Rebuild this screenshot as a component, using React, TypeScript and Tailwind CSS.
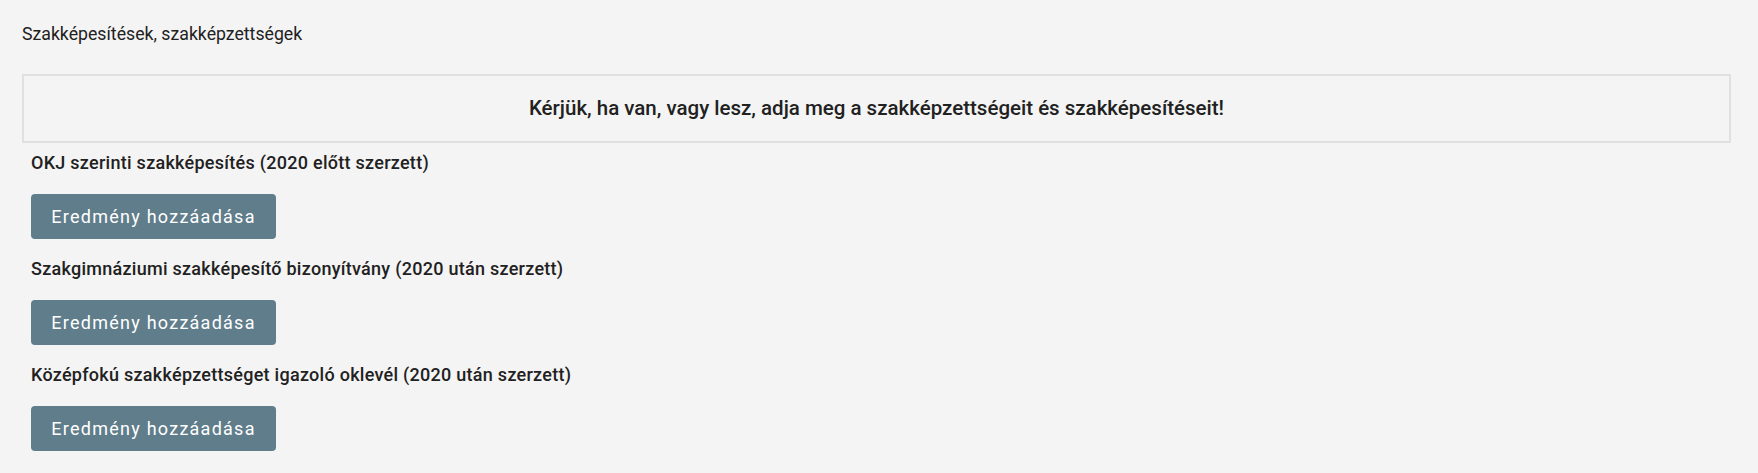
const sections = [
  "OKJ szerinti szakképesítés (2020 előtt szerzett)",
  "Szakgimnáziumi szakképesítő bizonyítvány (2020 után szerzett)",
  "Középfokú szakképzettséget igazoló oklevél (2020 után szerzett)",
];

export default function App() {
  return (
    <div className="min-h-screen bg-[#f4f4f4] pl-[22px] pr-[27px] pt-[22px] font-['Roboto',sans-serif] text-[#212121]">
      <h2 className="text-[17.7px] leading-[24px] font-normal">Szakképesítések, szakképzettségek</h2>

      <div className="mt-[28px] flex h-[69px] items-center justify-center border-2 border-[#e0e0e0]">
        <p className="text-[20.5px] font-medium">
          Kérjük, ha van, vagy lesz, adja meg a szakképzettségeit és szakképesítéseit!
        </p>
      </div>

      <div className="flex flex-col pl-[9px] pt-[8px]">
        {sections.map((title) => (
          <div key={title} className="flex flex-col items-start pb-[18px]">
            <p className="text-[18px] leading-[24px] font-medium tracking-[0.27px]">{title}</p>
            <button
              type="button"
              className="mt-[19px] h-[45px] w-[245px] rounded-[4px] bg-[#607d8b] text-[18px] tracking-[1.25px] text-white"
            >
              Eredmény hozzáadása
            </button>
          </div>
        ))}
      </div>
    </div>
  );
}
